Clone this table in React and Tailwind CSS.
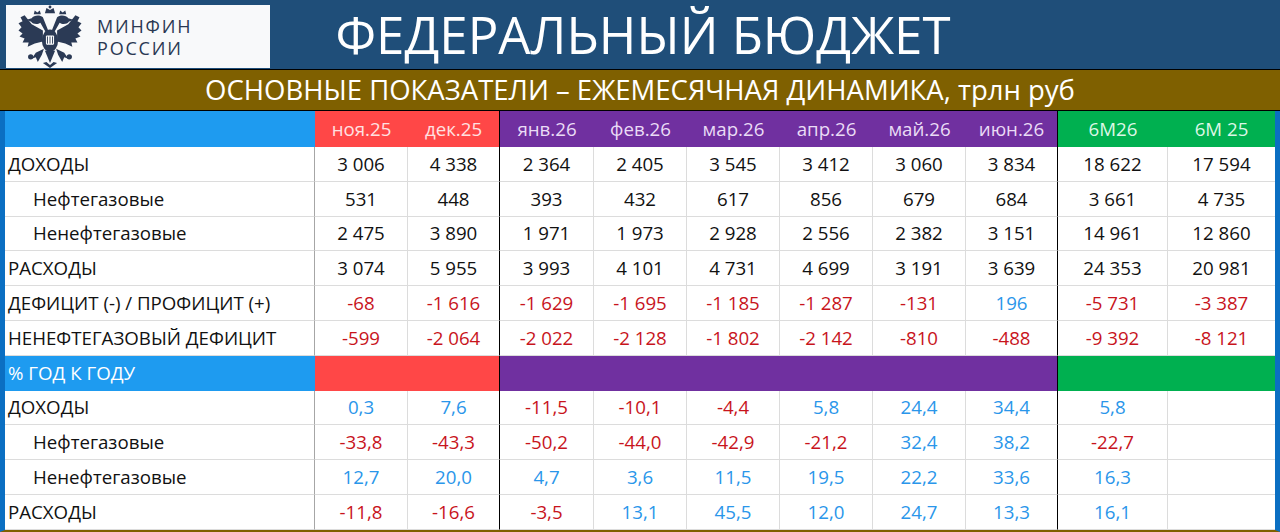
import React from 'react'

const months = [
  { label: 'ноя.25', group: 'red' },
  { label: 'дек.25', group: 'red', edge: true },
  { label: 'янв.26', group: 'purple' },
  { label: 'фев.26', group: 'purple' },
  { label: 'мар.26', group: 'purple' },
  { label: 'апр.26', group: 'purple' },
  { label: 'май.26', group: 'purple' },
  { label: 'июн.26', group: 'purple', edge: true },
  { label: '6M26', group: 'green' },
  { label: '6M 25', group: 'green' },
]

const headBg = {
  red: 'bg-[#ff4747] text-[#ffe1e1]',
  purple: 'bg-[#7030a0] text-[#eadcf6]',
  green: 'bg-[#00b050] text-[#dcf7e6]',
}

const rows = [
  { name: 'ДОХОДЫ', v: ['3 006', '4 338', '2 364', '2 405', '3 545', '3 412', '3 060', '3 834', '18 622', '17 594'] },
  { name: 'Нефтегазовые', sub: true, v: ['531', '448', '393', '432', '617', '856', '679', '684', '3 661', '4 735'] },
  { name: 'Ненефтегазовые', sub: true, v: ['2 475', '3 890', '1 971', '1 973', '2 928', '2 556', '2 382', '3 151', '14 961', '12 860'] },
  { name: 'РАСХОДЫ', v: ['3 074', '5 955', '3 993', '4 101', '4 731', '4 699', '3 191', '3 639', '24 353', '20 981'] },
  { name: 'ДЕФИЦИТ (-) / ПРОФИЦИТ (+)', color: true, v: ['-68', '-1 616', '-1 629', '-1 695', '-1 185', '-1 287', '-131', '196', '-5 731', '-3 387'] },
  { name: 'НЕНЕФТЕГАЗОВЫЙ ДЕФИЦИТ', color: true, v: ['-599', '-2 064', '-2 022', '-2 128', '-1 802', '-2 142', '-810', '-488', '-9 392', '-8 121'] },
]

const pctRows = [
  { name: 'ДОХОДЫ', v: ['0,3', '7,6', '-11,5', '-10,1', '-4,4', '5,8', '24,4', '34,4', '5,8', ''] },
  { name: 'Нефтегазовые', sub: true, v: ['-33,8', '-43,3', '-50,2', '-44,0', '-42,9', '-21,2', '32,4', '38,2', '-22,7', ''] },
  { name: 'Ненефтегазовые', sub: true, v: ['12,7', '20,0', '4,7', '3,6', '11,5', '19,5', '22,2', '33,6', '16,3', ''] },
  { name: 'РАСХОДЫ', v: ['-11,8', '-16,6', '-3,5', '13,1', '45,5', '12,0', '24,7', '13,3', '16,1', ''] },
]

function Eagle() {
  return (
    <svg viewBox="0 0 64 62" className="w-[66px] h-[63px]" fill="#2b3a55">
      {/* crowns */}
      <path d="M27 8 L28.5 3 L32 5 L35.5 3 L37 8 Z" />
      <circle cx="32" cy="2" r="1.4" />
      <path d="M16 9 L17 5.5 L19.5 7.5 L22 5.5 L23 9 Z" />
      <path d="M41 9 L42 5.5 L44.5 7.5 L47 5.5 L48 9 Z" />
      {/* heads and necks */}
      <path d="M25 12 C22 9.5 16 10 14 13 L9 14.5 L13.5 16.5 C15 19 20 19.5 22.5 17.5 L28 27 L31 27 Z" />
      <path d="M39 12 C42 9.5 48 10 50 13 L55 14.5 L50.5 16.5 C49 19 44 19.5 41.5 17.5 L36 27 L33 27 Z" />
      {/* wings raised */}
      <path d="M25 25 L14 19 L7 10 L3 12 L5 16 L1 18 L4 22 L1 25 L5 28 L2 31 L7 33 L5 37 L11 37 L10 41 L17 38 L25 36 Z" />
      <path d="M39 25 L50 19 L57 10 L61 12 L59 16 L63 18 L60 22 L63 25 L59 28 L62 31 L57 33 L59 37 L53 37 L54 41 L47 38 L39 36 Z" />
      {/* body with shield */}
      <ellipse cx="32" cy="35" rx="8" ry="11" />
      <rect x="28" y="30" width="8" height="9" fill="#fff" rx="1" />
      <path d="M29.5 31 v7 M32 31 v7 M34.5 31 v7" stroke="#2b3a55" strokeWidth="0.9" />
      {/* legs, tail */}
      <path d="M26 43 L18 47 L14 53 L18 51.5 L20 56 L24 49 Z" />
      <path d="M38 43 L46 47 L50 53 L46 51.5 L44 56 L40 49 Z" />
      <circle cx="13" cy="51" r="2.6" />
      <circle cx="51" cy="51" r="2.6" />
      <path d="M27 45 L32 57 L37 45 Z" />
      <path d="M25 57 L32 62 L39 57 L35.5 56 L32 59 L28.5 56 Z" />
    </svg>
  )
}

function valColor(s, colored) {
  if (!colored) return 'text-[#111]'
  if (s.startsWith('-')) return 'text-[#c8141c]'
  return 'text-[#2a96ea]'
}

function cellBorder(i) {
  const m = months[i]
  if (m.edge) return 'border-r border-r-black'
  if (i === months.length - 1) return ''
  return 'border-r border-r-[#dcdcdc]'
}

function DataRow({ r, colored }) {
  return (
    <>
      <div className={`h-[34.8px] flex items-center border-b border-b-[#dcdcdc] border-r border-r-[#a6a6a6] ${r.sub ? 'pl-[28px]' : 'pl-[3px]'} text-[#111] whitespace-nowrap`}>
        {r.name}
      </div>
      {r.v.map((s, i) => (
        <div key={i} className={`h-[34.8px] flex items-center justify-center border-b border-b-[#dcdcdc] ${cellBorder(i)} ${valColor(s, colored)}`}>
          {s}
        </div>
      ))}
    </>
  )
}

export default function App() {
  return (
    <div className="w-[1280px] h-[532px] overflow-hidden bg-white font-['Open_Sans',sans-serif]">
      <div className="h-[70px] bg-[#1f4e79] flex items-center border-b border-b-black relative">
        <div className="absolute left-[6px] top-[5px] w-[264px] h-[63px] bg-[#f8f9fa] flex items-center pl-[11px] gap-[14px]">
          <Eagle />
          <div className="text-[#2a3852] text-[18px] leading-[22px] tracking-[1.8px] font-medium">
            <div>МИНФИН</div>
            <div>РОССИИ</div>
          </div>
        </div>
        <div className="w-full text-center text-white text-[51px] leading-none pl-[6px]">ФЕДЕРАЛЬНЫЙ БЮДЖЕТ</div>
      </div>
      <div className="h-[41px] bg-[#7f6000] border-b border-b-black flex items-center justify-center text-white text-[27.5px] leading-none">
        ОСНОВНЫЕ ПОКАЗАТЕЛИ – ЕЖЕМЕСЯЧНАЯ ДИНАМИКА, трлн руб
      </div>
      <div className="border-l-[5px] border-l-[#0b6fc2] border-r-[5px] border-r-[#0b6fc2] border-b-2 border-b-[#7f6000]">
        <div className="grid grid-cols-[310px_93px_92px_94px_93px_93px_93px_93px_92px_110px_107px] text-[18.7px]">
          <div className="h-[36px] bg-[#1e9bf0]" />
          {months.map((m) => (
            <div key={m.label} className={`h-[36px] flex items-center justify-center ${headBg[m.group]} ${m.edge ? 'border-r border-r-black' : ''}`}>
              {m.label}
            </div>
          ))}
          {rows.map((r) => (
            <DataRow key={r.name} r={r} colored={r.color} />
          ))}
          <div className="h-[34.8px] bg-[#1e9bf0] text-white flex items-center pl-[3px]">% ГОД К ГОДУ</div>
          <div className="col-span-2 bg-[#ff4747] border-r border-r-black" />
          <div className="col-span-6 bg-[#7030a0] border-r border-r-black" />
          <div className="col-span-2 bg-[#00b050]" />
          {pctRows.map((r) => (
            <DataRow key={'p' + r.name} r={r} colored />
          ))}
        </div>
      </div>
    </div>
  )
}
